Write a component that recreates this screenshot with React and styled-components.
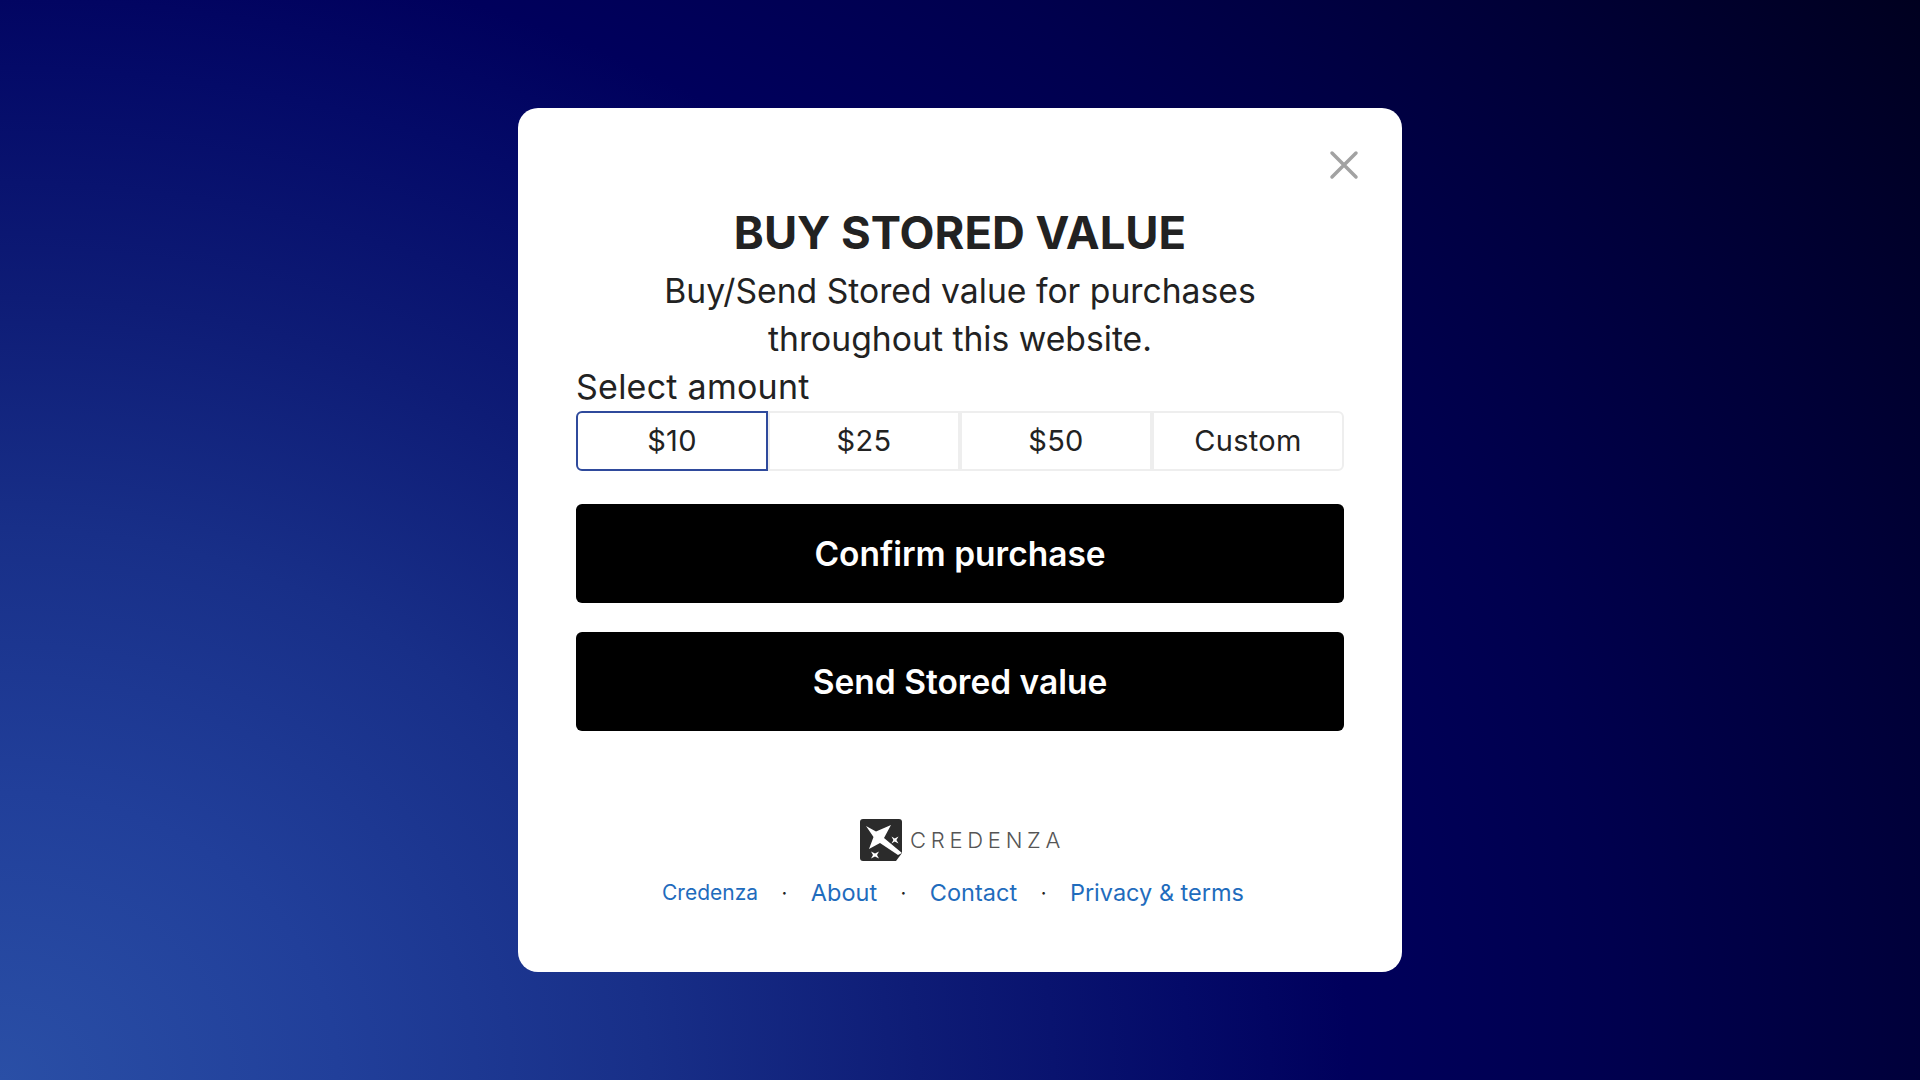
import React, { useState } from "react";
import styled, { createGlobalStyle } from "styled-components";

const Global = createGlobalStyle`
  html, body {
    margin: 0;
    padding: 0;
  }
  body {
    font-family: "Inter", "Liberation Sans", sans-serif;
  }
`;

const Page = styled.div`
  width: 1920px;
  height: 1080px;
  display: flex;
  align-items: center;
  justify-content: center;
  background: radial-gradient(
    ellipse 1350px 1150px at 0% 100%,
    #2a4fa6 0%,
    #213f9a 25%,
    #182f88 48%,
    #0e1c76 68%,
    #040a68 88%,
    #00005c 100%,
    #00004e 120%,
    #000038 145%,
    #00001e 172%
  );
`;

const Modal = styled.div`
  position: relative;
  box-sizing: border-box;
  width: 884px;
  height: 864px;
  padding: 96px 58px 0;
  background: #fff;
  border-radius: 20px;
  display: flex;
  flex-direction: column;
  color: #222;
`;

const Close = styled.button`
  position: absolute;
  top: 42px;
  right: 43px;
  width: 30px;
  height: 30px;
  padding: 0;
  border: 0;
  background: none;
  color: #a2a2a2;
`;

const Title = styled.h1`
  margin: 0 0 5px;
  font-size: 45.4px;
  line-height: 58px;
  font-weight: 700;
  text-align: center;
  color: #222;
`;

const Subtitle = styled.p`
  margin: 0;
  font-size: 33.7px;
  line-height: 48px;
  font-weight: 400;
  text-align: center;
  color: #222;
`;

const Label = styled.div`
  font-size: 34px;
  line-height: 48px;
  letter-spacing: 0.25px;
  color: #222;
`;

const Amounts = styled.div`
  display: grid;
  grid-template-columns: repeat(4, 1fr);
  height: 60px;
`;

const Amount = styled.button`
  box-sizing: border-box;
  padding: 0 0 2px;
  background: #fff;
  font-family: inherit;
  font-size: 29px;
  letter-spacing: 0.3px;
  color: #222;
  border: ${(p) => (p.$active ? "2px solid #2f4a9c" : "2px solid #eeeeee")};
  border-radius: ${(p) => p.$radius};
`;

const Action = styled.button`
  height: 99px;
  margin-top: ${(p) => p.$top};
  border: 0;
  border-radius: 6px;
  background: #000;
  color: #fff;
  font-family: inherit;
  font-size: 33.5px;
  font-weight: 600;
`;

const Brand = styled.div`
  display: flex;
  align-items: center;
  justify-content: center;
  gap: 8px;
  margin-top: 88px;
  padding-left: 5px;
  height: 42px;
`;

const BrandName = styled.span`
  font-size: 22px;
  font-weight: 300;
  letter-spacing: 4.75px;
  color: #555;
`;

const Links = styled.nav`
  display: flex;
  justify-content: center;
  align-items: center;
  gap: 23.5px;
  margin-top: 17px;
  padding-right: 14px;
`;

const Link = styled.a`
  font-size: ${(p) => p.$size || "23.5px"};
  color: #1f6cbd;
`;

const Dot = styled.span`
  color: #222;
  font-size: 20px;
`;

const Logo = () => (
  <svg width="42" height="42" viewBox="0 0 42 42">
    <path d="M3 0H39A3 3 0 0 1 42 3V34L36 42H3A3 3 0 0 1 0 39V3A3 3 0 0 1 3 0Z" fill="#2b2b2b" />
    <path d="M6 7L16 12.5L31 6L24 19L42 34L38 36L20 24L9 30L13.5 18Z" fill="#fff" />
    <path d="M31.5 17.5L34.7 19.6L38.5 17.5L36.4 21L38.5 24.5L34.7 22.4L31.5 24.5L33.4 21Z" fill="#fff" />
    <path d="M11 32.5L15 34.4L19 32.5L17 36L19 39.5L15 37.6L11 39.5L13 36Z" fill="#fff" />
  </svg>
);

export default function App() {
  const [amount, setAmount] = useState("$10");
  const options = ["$10", "$25", "$50", "Custom"];
  return (
    <Page>
      <Global />
      <Modal>
        <Close aria-label="Close">
          <svg width="30" height="30" viewBox="0 0 30 30" fill="none" stroke="currentColor" strokeWidth="3.5" strokeLinecap="round">
            <path d="M3 3L27 27M27 3L3 27" />
          </svg>
        </Close>
        <Title>BUY STORED VALUE</Title>
        <Subtitle>
          Buy/Send Stored value for purchases
          <br />
          throughout this website.
        </Subtitle>
        <Label>Select amount</Label>
        <Amounts>
          {options.map((o, i) => (
            <Amount
              key={o}
              $active={amount === o}
              $radius={i === 0 ? "6px 0 0 6px" : i === 3 ? "0 6px 6px 0" : "0"}
              onClick={() => setAmount(o)}
            >
              {o}
            </Amount>
          ))}
        </Amounts>
        <Action $top="33px">Confirm purchase</Action>
        <Action $top="29px">Send Stored value</Action>
        <Brand>
          <Logo />
          <BrandName>CREDENZA</BrandName>
        </Brand>
        <Links>
          <Link $size="21px">Credenza</Link>
          <Dot>·</Dot>
          <Link>About</Link>
          <Dot>·</Dot>
          <Link>Contact</Link>
          <Dot>·</Dot>
          <Link>Privacy &amp; terms</Link>
        </Links>
      </Modal>
    </Page>
  );
}
